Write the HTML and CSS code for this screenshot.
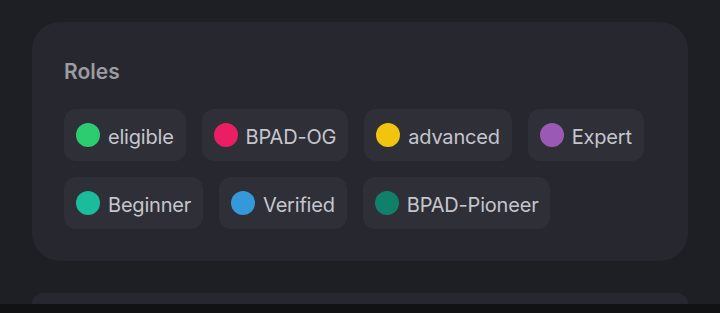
FILE: index.html
```html
<!DOCTYPE html>
<html lang="en">
<head>
    <meta charset="UTF-8">
    <meta name="viewport" content="width=device-width, initial-scale=1.0">
    <title>Roles</title>
    <link rel="stylesheet" href="styles.css">
</head>
<body>
    <div class="page">
        <div class="card">
            <h2 class="title">Roles</h2>
            <div class="roles">
                <div class="role"><span class="dot green"></span><span class="name">eligible</span></div>
                <div class="role"><span class="dot pink"></span><span class="name">BPAD-OG</span></div>
                <div class="role"><span class="dot yellow"></span><span class="name">advanced</span></div>
                <div class="role"><span class="dot purple"></span><span class="name">Expert</span></div>
                <div class="role"><span class="dot teal"></span><span class="name">Beginner</span></div>
                <div class="role"><span class="dot blue"></span><span class="name">Verified</span></div>
                <div class="role"><span class="dot dark-teal"></span><span class="name">BPAD-Pioneer</span></div>
            </div>
        </div>
        <div class="card next"></div>
    </div>
    <div class="bottom-bar"></div>
</body>
</html>
```

FILE: styles.css
```css
body {
    font-family: Inter, "Noto Sans", sans-serif;
    background-color: #1e1f24;
    margin: 0;
    padding: 0;
    height: 313px;
    overflow: hidden;
    display: flex;
    flex-direction: column;
}
.page {
    flex: 1;
    padding: 22px 32px 0;
    display: flex;
    flex-direction: column;
    gap: 32px;
    overflow: hidden;
}
.card {
    background-color: #27282f;
    border-radius: 28px;
    padding: 36px 32px 32px;
}
.card.next {
    flex: 1;
    padding: 0;
    border-bottom-left-radius: 0;
    border-bottom-right-radius: 0;
}
.title {
    margin: 0 0 23px;
    font-size: 21px;
    line-height: 28px;
    font-weight: 600;
    color: #9a9ba3;
}
.roles {
    display: flex;
    flex-wrap: wrap;
    gap: 16px;
}
.role {
    display: flex;
    align-items: center;
    gap: 8px;
    height: 52px;
    box-sizing: border-box;
    padding: 0 12px;
    background-color: #2e2f37;
    border-radius: 12px;
    font-size: 20px;
    letter-spacing: -0.2px;
    color: #c5c6cd;
}
.name {
    padding-top: 4px;
}
.dot {
    width: 24px;
    height: 24px;
    border-radius: 50%;
}
.green { background-color: #2ecc71; }
.pink { background-color: #e91e63; }
.yellow { background-color: #f1c40f; }
.purple { background-color: #9b59b6; }
.teal { background-color: #1abc9c; }
.blue { background-color: #3498db; }
.dark-teal { background-color: #11806a; }
.bottom-bar {
    height: 9px;
    background-color: #111214;
}
```
